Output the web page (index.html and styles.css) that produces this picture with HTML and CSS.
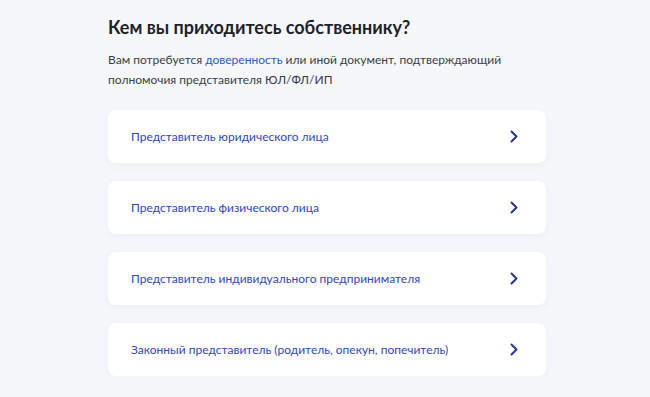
FILE: index.html
```html
<!DOCTYPE html>
<html lang="ru">
  <head>
    <meta charset="UTF-8" />
    <meta name="viewport" content="width=device-width, initial-scale=1.0" />
    <title>Кем вы приходитесь собственнику?</title>
    <link rel="stylesheet" href="styles.css">
  </head>
  <body>
    <div class="page">
      <h1 class="title">Кем вы приходитесь собственнику?</h1>
      <p class="lead">
        Вам потребуется <a class="link" href="#">доверенность</a> или иной документ, подтверждающий<br />
        полномочия представителя ЮЛ/ФЛ/ИП
      </p>
      <div class="options">
        <a class="option" href="#">
          <span>Представитель юридического лица</span>
          <svg class="chevron" width="8" height="13" viewBox="0 0 8 13"><path d="M1.5 1.5l5 5-5 5" /></svg>
        </a>
        <a class="option" href="#">
          <span>Представитель физического лица</span>
          <svg class="chevron" width="8" height="13" viewBox="0 0 8 13"><path d="M1.5 1.5l5 5-5 5" /></svg>
        </a>
        <a class="option" href="#">
          <span>Представитель индивидуального предпринимателя</span>
          <svg class="chevron" width="8" height="13" viewBox="0 0 8 13"><path d="M1.5 1.5l5 5-5 5" /></svg>
        </a>
        <a class="option" href="#">
          <span>Законный представитель (родитель, опекун, попечитель)</span>
          <svg class="chevron" width="8" height="13" viewBox="0 0 8 13"><path d="M1.5 1.5l5 5-5 5" /></svg>
        </a>
      </div>
    </div>
  </body>
</html>
```

FILE: styles.css
```css
body {
  margin: 0;
  background-color: #f5f7fb;
  font-family: Lato, "Noto Sans", Arial, sans-serif;
}

.page {
  width: 438px;
  padding: 14px 0 0 108px;
}

.title {
  margin: 0;
  font-size: 18px;
  line-height: 26px;
  font-weight: 700;
  color: #1f2229;
}

.lead {
  margin: 10px 0 0;
  font-size: 12px;
  line-height: 20px;
  color: #3a3d44;
}

.link {
  color: #2c57d0;
  text-decoration: none;
}

.options {
  display: flex;
  flex-direction: column;
  gap: 18px;
  margin-top: 20px;
}

.option {
  display: flex;
  align-items: center;
  justify-content: space-between;
  height: 53px;
  padding: 0 28px 0 23px;
  background: #fff;
  border-radius: 8px;
  box-shadow: 0 2px 8px rgba(40, 60, 110, 0.05);
  font-size: 12px;
  color: #3048c0;
  text-decoration: none;
}

.chevron path {
  fill: none;
  stroke: #26359a;
  stroke-width: 2;
  stroke-linecap: round;
  stroke-linejoin: round;
}
```
